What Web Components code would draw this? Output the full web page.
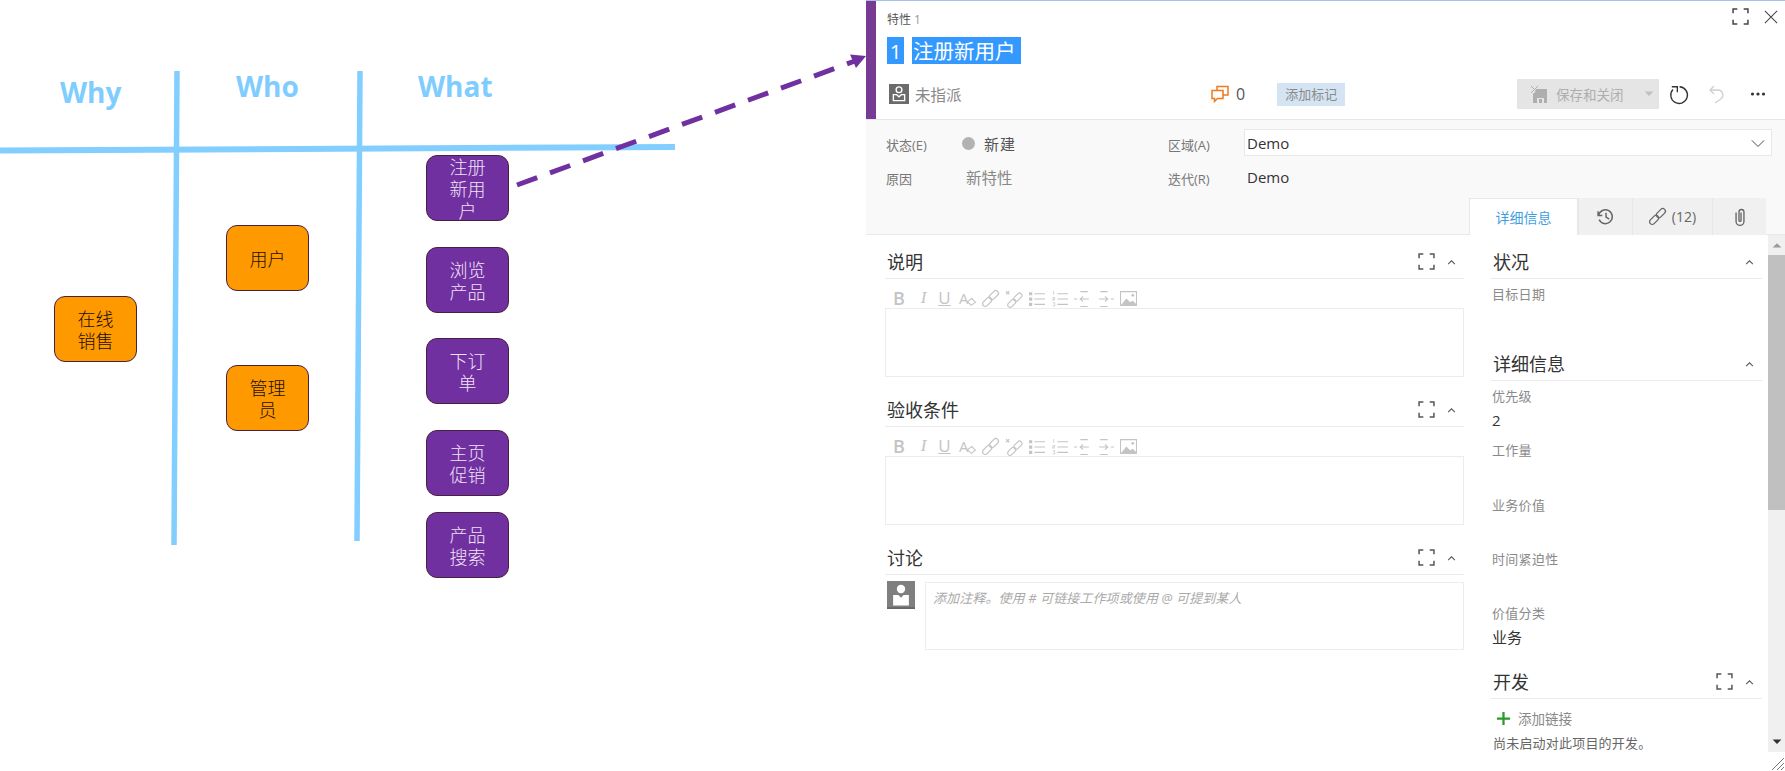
<!doctype html>
<html lang="zh">
<head>
<meta charset="utf-8">
<title>特性 1</title>
<style>
  html, body { margin: 0; height: 100%; overflow: hidden; background: #fff; }
  body { display: flex; font-family: "Open Sans", "Noto Sans CJK SC", sans-serif; color: #333; }
</style>
</head>
<body>
<story-canvas>
  <story-node x="426" y="155" h="66" kind="what">注册新用户</story-node>
  <story-node x="426" y="247" h="66" kind="what">浏览产品</story-node>
  <story-node x="426" y="338" h="66" kind="what">下订单</story-node>
  <story-node x="426" y="430" h="66" kind="what">主页促销</story-node>
  <story-node x="426" y="512" h="66" kind="what">产品搜索</story-node>
  <story-node x="226" y="225" h="66" kind="who">用户</story-node>
  <story-node x="226" y="365" h="66" kind="who">管理员</story-node>
  <story-node x="54" y="296" h="66" kind="who">在线销售</story-node>
</story-canvas>
<work-item></work-item>

<script>
const icons = {
  expand: '<path d="M1 5V1h4M11 1h4v4M15 11v4h-4M5 15H1v-4" fill="none" stroke="currentColor" stroke-width="1.4"/>',
  close: '<path d="M1 1l14 14M15 1L1 15" fill="none" stroke="currentColor" stroke-width="1.2"/>',
  up: '<path d="M2 11l6-6 6 6" fill="none" stroke="currentColor" stroke-width="1.8"/>',
  down: '<path d="M1 5l7 7 7-7" fill="none" stroke="currentColor" stroke-width="1.1"/>',
  person: '<rect width="16" height="16" fill="#6b6b6b"/><circle cx="8" cy="4.6" r="2.3" fill="none" stroke="#fff" stroke-width="1.1"/><path d="M3.5 8.5h2.6l1.9 1.7 1.9-1.7h2.6v4.8h-9z" fill="none" stroke="#fff" stroke-width="1.1"/>',
  avatar: '<rect width="16" height="16" fill="#7f7f7f"/><rect y="15" width="16" height="1" fill="#666"/><circle cx="8" cy="4.6" r="2.4" fill="#fff"/><path d="M3.5 8h3l1.5 1.6L9.500 8h3v6h-9z" fill="#fff"/>',
  comments: '<path d="M6 5V1.500h11v8.500h-5M1 5.500h11v8H6.500L3.500 16.500v-3H1z" fill="none" stroke="currentColor" stroke-width="1.5"/>',
  save: '<path d="M6 4h11v14h-3v-5H7v5H3V9l3-3z" fill="currentColor"/><rect x="9" y="14" width="3" height="4" fill="currentColor"/><path d="M1 1l7 7M8 1L1 8" fill="none" stroke="currentColor" stroke-width="1"/>',
  refresh: '<path d="M2.500 2.500h5v5M9.500 2.500A7.500 7.500 0 1 1 3.500 5" fill="none" stroke="currentColor" stroke-width="1.2"/>',
  undo: '<path d="M6 1L2 5l4 4M2 5h8a5 5 0 0 1 2 9.500L7 18" fill="none" stroke="currentColor" stroke-width="1.3"/>',
  dots: '<circle cx="2.500" cy="8" r="1.600" fill="currentColor"/><circle cx="8" cy="8" r="1.600" fill="currentColor"/><circle cx="13.500" cy="8" r="1.600" fill="currentColor"/>',
  caret: '<path d="M1 4h14l-7 7z" fill="currentColor"/>',
  history: '<path d="M1 3v4h4M1.500 7A6.500 6.500 0 1 1 2 11M8.500 4.500V8.500l3 2" fill="none" stroke="currentColor" stroke-width="1.4"/>',
  link: '<g transform="rotate(-45 8 8)" fill="none" stroke="currentColor" stroke-width="1.2"><rect x="-1.500" y="5.500" width="10" height="5" rx="2.500"/><rect x="7.500" y="5.500" width="10" height="5" rx="2.500"/></g>',
  clip: '<path d="M4.500 4v8a3.500 3.500 0 0 0 7 0V3.500a2.200 2.200 0 0 0-4.400 0V11a.9.9 0 0 0 1.800 0V4" fill="none" stroke="currentColor" stroke-width="1.2"/>',
  plus: '<path d="M8 1v14M1 8h14" fill="none" stroke="currentColor" stroke-width="2.400"/>',
  eraser: '<text x="0" y="13" font-size="14" font-family="Open Sans" fill="currentColor">A</text><path d="M8 11l4-3 3.500 3.500-4 3z" fill="none" stroke="currentColor" stroke-width="1"/>',
  unlink: '<path d="M1 1l3 3M4 1L1 4" fill="none" stroke="currentColor" stroke-width="1"/><g transform="rotate(-45 10 10) translate(2.500 2) scale(.9)" fill="none" stroke="currentColor" stroke-width="1.200"><rect x="-1.500" y="5.500" width="10" height="5" rx="2.500"/><rect x="7.500" y="5.500" width="10" height="5" rx="2.500"/></g>',
  ul: '<path d="M1 2h3v3H1zM1 7h3v3H1zM1 12h3v3H1z" fill="currentColor"/><path d="M6 3.500h10M6 8.500h10M6 13.500h10" stroke="currentColor" stroke-width="1"/>',
  ol: '<path d="M2.500 1v3.500M1.500 7h2v1.500h-2v1h2M1.500 12h2v3h-2" fill="none" stroke="currentColor" stroke-width=".7"/><path d="M6 3.500h10M6 8.500h10M6 13.500h10" stroke="currentColor" stroke-width="1"/>',
  outdent: '<path d="M6 1.500h7M0 8.500h3M6 15.500h7M14 8.500H6l2.500-2.500M6 8.500L8.500 11" fill="none" stroke="currentColor" stroke-width="1"/>',
  indent: '<path d="M3 1.500h7M13 8.500h3M3 15.500h7M2 8.500h8L7.500 6M10 8.500L7.500 11" fill="none" stroke="currentColor" stroke-width="1"/>',
  image: '<path d="M.5 1.500h15v13H.5z" fill="none" stroke="currentColor"/><path d="M1 14l5-6 3.500 3.500L12 10l3 3v1.500H1z" fill="currentColor"/><circle cx="12" cy="5" r="1.300" fill="currentColor"/>',
  grip: '<path d="M15 3L3 15M15 8l-7 7M15 12l-3 3" stroke="#777" stroke-width="1" fill="none"/>'
}

customElements.define('sk-icon', class extends HTMLElement {
  connectedCallback () {
    if (this.shadowRoot) return
    const size = this.getAttribute('size') || 16
    const box = this.getAttribute('box') || 16
    this.attachShadow({ mode: 'open' }).innerHTML = `
      <style>
        :host { display: inline-flex; flex: none; line-height: 0; }
        svg { display: block; overflow: visible; }
      </style>
      <svg width="${size}" height="${size}" viewBox="0 0 ${box} ${box}">${icons[this.getAttribute('name')]}</svg>`
  }
})

customElements.define('story-canvas', class extends HTMLElement {
  constructor () {
    super()
    this.attachShadow({ mode: 'open' }).innerHTML = `
      <style>
        :host { display: block; position: relative; flex: none; width: 866px; height: 771px; }
        svg { position: absolute; left: 0; top: 0; z-index: 2; overflow: visible; pointer-events: none; }
        .axes { z-index: 0; }
        span {
          position: absolute; color: #7fcdff; font: 700 28px/40px "Open Sans", sans-serif;
        }
      </style>
      <svg class="axes" width="866" height="771">
        <g stroke="#82ceff" fill="none">
          <path d="M0 150.500L675 147" stroke-width="6"/>
          <path d="M177 71L174 545M360 71L357 541" stroke-width="5.500"/>
        </g>
      </svg>
      <span style="left:60px;top:72px">Why</span>
      <span style="left:236px;top:66px">Who</span>
      <span style="left:418px;top:66px">What</span>
      <slot></slot>
      <svg width="866" height="771">
        <path d="M517 185L855 61" stroke="#7030a0" stroke-width="5" stroke-dasharray="21.500 13.650" fill="none"/>
        <path d="M866 56L850 54.500L856 68z" fill="#7030a0"/>
      </svg>`
  }
})

customElements.define('story-node', class extends HTMLElement {
  connectedCallback () {
    if (this.shadowRoot) return
    const who = this.getAttribute('kind') === 'who'
    this.attachShadow({ mode: 'open' }).innerHTML = `
      <style>
        :host {
          position: absolute; z-index: 1; box-sizing: border-box; display: flex; align-items: center; justify-content: center;
          left: ${this.getAttribute('x')}px; top: ${this.getAttribute('y')}px; width: 83px; height: ${this.getAttribute('h')}px;
          padding: 0 21px; text-align: center; font-size: 18px; line-height: 22px; border-radius: 11px; font-weight: 300;
          border: 1px solid #4a2040; font-family: "Noto Sans CJK SC", sans-serif;
          background: ${who ? '#ff9900' : '#7030a0'}; color: ${who ? '#1a1000' : '#f1e2f7'};
        }
      </style>
      <slot></slot>`
  }
})

customElements.define('form-section', class extends HTMLElement {
  connectedCallback () {
    if (this.shadowRoot) return
    const expand = this.hasAttribute('expand') ? '<sk-icon name="expand" size="17"></sk-icon>' : ''
    this.attachShadow({ mode: 'open' }).innerHTML = `
      <style>
        :host { display: block; }
        header {
          display: flex; align-items: center; height: 34px; border-bottom: 1px solid #ebebeb; color: #555;
          padding-left: 2px;
        }
        h2 { margin: 0 auto 0 0; font: 400 18px/1 "Noto Sans CJK SC", sans-serif; color: #333; }
        .chev { margin: 3px 8px 0 12px; }
      </style>
      <header>
        <h2>${this.getAttribute('heading')}</h2>
        ${expand}
        <sk-icon class="chev" name="up" size="9"></sk-icon>
      </header>
      <slot></slot>`
  }
})

customElements.define('rich-editor', class extends HTMLElement {
  constructor () {
    super()
    const cell = n => `<sk-icon name="${n}" size="17"></sk-icon>`
    this.attachShadow({ mode: 'open' }).innerHTML = `
      <style>
        :host { display: block; }
        .tools {
          display: flex; align-items: center; gap: 6px; height: 18px; padding: 10px 0 1px 8px; color: #c4c4c4;
        }
        b, i, u { width: 17px; text-align: center; font: 400 17px/18px "Open Sans", sans-serif; }
        b { font-weight: 600; width: 11px; font-size: 18px; }
        i { font-family: "Liberation Serif", serif; font-style: italic; margin-left: 5px; width: 17px; }
        u { margin-left: -2px; }
        .box { height: 67px; border: 1px solid #ececec; }
      </style>
      <div class="tools">
        <b>B</b><i>I</i><u>U</u>
        ${['eraser', 'link', 'unlink', 'ul', 'ol', 'outdent', 'indent', 'image'].map(cell).join('')}
      </div>
      <div class="box"></div>`
  }
})

customElements.define('side-field', class extends HTMLElement {
  connectedCallback () {
    if (this.shadowRoot) return
    this.attachShadow({ mode: 'open' }).innerHTML = `
      <style>
        :host { display: block; height: 54.200px; padding-left: 1px; }
        div { font-size: 13px; line-height: 18px; color: #8a8a8a; letter-spacing: .3px; }
        p { margin: 3px 0 0; font-size: 15px; line-height: 24px; color: #333; }
      </style>
      <div>${this.getAttribute('label')}</div>
      <p>${this.getAttribute('value') || ''}</p>`
  }
})

customElements.define('wi-header', class extends HTMLElement {
  constructor () {
    super()
    this.attachShadow({ mode: 'open' }).innerHTML = `
      <style>
        :host {
          display: flex; flex: none; height: 120px; box-sizing: border-box; background: #fff;
          border-top: 1px solid #a6c0e6; border-bottom: 1px solid #e6e6e6;
        }
        .bar { width: 10px; background: #773b93; }
        .main { flex: 1; padding-left: 11px; display: flex; flex-direction: column; }
        .top { display: flex; height: 36px; align-items: center; font-size: 12px; color: #555; }
        .top em { font-style: normal; color: #999; margin-left: 3px; }
        .win { margin-left: auto; align-self: flex-start; margin-top: 7px; display: flex; align-items: center; color: #444; padding-right: 7px; gap: 15px; }
        .title { display: flex; gap: 8px; height: 27px; font-size: 20.500px; line-height: 28px; color: #fff; }
        .title span { background: #3399ff; }
        .title .id { width: 17px; text-align: center; }
        .title .name { padding: 0 5px 0 1px; }
        .row { display: flex; align-items: center; height: 30px; margin-top: 15px; padding-right: 16px; }
        .owner { display: flex; align-items: center; gap: 6px; width: 322px; padding-left: 2px; font-size: 15.500px; color: #888; }
        .count { display: flex; align-items: center; gap: 7px; font-size: 16px; color: #555; }
        .count sk-icon { color: #f07a1c; }
        .tag { margin-left: 32px; background: #d4e4f2; color: #8a8a8a; font-size: 13px; line-height: 23px; width: 68px; text-align: center; }
        .save {
          margin-left: auto; width: 142px; height: 30px; box-sizing: border-box; display: flex; align-items: center;
          padding-left: 13px; background: #e5e5e5; color: #aeaeae; font-size: 13.500px;
        }
        .save span { margin-left: 8px; }
        .save .car { margin-left: 20px; color: #c0c0c0; }
        .act { width: 22px; display: flex; justify-content: center; color: #333; }
        .act.off { color: #d0d0d0; }
      </style>
      <div class="bar"></div>
      <div class="main">
        <div class="top">
          <span>特性<em>1</em></span>
          <div class="win">
            <sk-icon name="expand" size="17"></sk-icon>
            <sk-icon name="close" size="14"></sk-icon>
          </div>
        </div>
        <div class="title"><span class="id">1</span><span class="name">注册新用户</span></div>
        <div class="row">
          <div class="owner"><sk-icon name="person" size="20"></sk-icon>未指派</div>
          <div class="count"><sk-icon name="comments" size="18" box="18"></sk-icon>0</div>
          <div class="tag">添加标记</div>
          <div class="save">
            <sk-icon name="save" size="18" box="18"></sk-icon>
            <span>保存和关闭</span>
            <sk-icon class="car" name="caret" size="10"></sk-icon>
          </div>
          <div class="act" style="margin-left:9px"><sk-icon name="refresh" size="20" box="18"></sk-icon></div>
          <div class="act off" style="margin-left:16px"><sk-icon name="undo" size="18" box="18"></sk-icon></div>
          <div class="act" style="margin-left:19px"><sk-icon name="dots" size="16"></sk-icon></div>
        </div>
      </div>`
  }
})

customElements.define('wi-fields', class extends HTMLElement {
  constructor () {
    super()
    this.attachShadow({ mode: 'open' }).innerHTML = `
      <style>
        :host {
          display: flex; flex-direction: column; flex: none; height: 115px; box-sizing: border-box; background: #f9f9f9;
          border-bottom: 1px solid #e8e8e8; padding: 9px 19px 0 20px; position: relative;
        }
        .grid { display: grid; grid-template-columns: 80px 202px 76px 528px; grid-auto-rows: 27px; row-gap: 7px; align-items: center; font-size: 15px; }
        label { font-size: 13px; color: #777; padding-top: 3px; }
        .state { display: flex; align-items: center; gap: 9px; color: #555; letter-spacing: 1px; margin-top: 2px; }
        .state i { width: 13px; height: 13px; border-radius: 50%; background: #b2b2b2; margin-left: -4px; }
        .reason { color: #888; font-size: 15.500px; margin-top: 1px; }
        .area { height: 27px; box-sizing: border-box; border: 1px solid #e8e8e8; background: #fff; display: flex; align-items: center; padding: 0 6px 0 2px; justify-content: space-between; color: #333; }
        .demo { padding-left: 3px; color: #333; margin-top: 1px; }
        .tabs { display: flex; margin-left: auto; margin-top: auto; height: 37px; margin-bottom: -1px; font-size: 14px; }
        .tabs div { display: flex; align-items: center; justify-content: center; gap: 6px; background: #f0f0f0; border-left: 1px solid #e8e8e8; color: #666; box-sizing: border-box; }
        .tabs .on { width: 109px; background: #fff; color: #3f9fe0; border: 1px solid #e8e8e8; border-bottom: 0; }
      </style>
      <div class="grid">
        <label>状态(E)</label><div class="state"><i></i>新建</div>
        <label>区域(A)</label><div class="area">Demo<sk-icon name="down" size="14" style="color:#444"></sk-icon></div>
        <label>原因</label><div class="reason">新特性</div>
        <label>迭代(R)</label><div class="demo">Demo</div>
      </div>
      <div class="tabs">
        <div class="on">详细信息</div>
        <div style="width:54px"><sk-icon name="history" size="17"></sk-icon></div>
        <div style="width:80px"><sk-icon name="link" size="17"></sk-icon>(12)</div>
        <div style="width:54px"><sk-icon name="clip" size="18"></sk-icon></div>
      </div>`
  }
})

customElements.define('scroll-rail', class extends HTMLElement {
  constructor () {
    super()
    this.attachShadow({ mode: 'open' }).innerHTML = `
      <style>
        :host { display: flex; flex-direction: column; flex: none; width: 17px; }
        .btn { height: 20px; background: #f0f0f0; display: flex; align-items: center; justify-content: center; color: #9a9a9a; }
        .btn.end { color: #333; height: 20px; }
        .thumb { height: 255px; background: #c0c0c0; }
        .track { flex: 1; background: #f0f0f0; }
        .corner { height: 19px; display: flex; align-items: flex-end; justify-content: flex-end; }
      </style>
      <div class="btn"><sk-icon name="caret" size="10" style="transform:scaleY(-1)"></sk-icon></div>
      <div class="thumb"></div>
      <div class="track"></div>
      <div class="btn end"><sk-icon name="caret" size="10"></sk-icon></div>
      <div class="corner"><sk-icon name="grip" size="16" box="16"></sk-icon></div>`
  }
})

customElements.define('work-item', class extends HTMLElement {
  constructor () {
    super()
    this.attachShadow({ mode: 'open' }).innerHTML = `
      <style>
        :host { display: flex; flex-direction: column; flex: 1; min-width: 0; height: 771px; overflow: hidden; }
        .body { flex: 1; min-height: 0; display: flex; overflow: hidden; }
        .left { width: 579px; margin-left: 19px; padding-top: 9px; flex: none; }
        .left form-section + form-section { margin-top: 15px; }
        .right { width: 271px; margin-left: 27px; padding-top: 9px; flex: none; }
        .right form-section + form-section { margin-top: 7px; }
        .right form-section:last-child { margin-top: 6px; }
        .pad { padding-top: 6px; }
        scroll-rail { margin-left: 6px; }
        .talk { display: flex; padding-top: 6px; }
        .talk sk-icon { margin-left: 2px; }
        .note {
          flex: 1; margin: 1px 0 0 10px; border: 1px solid #ececec; padding: 6px 7px; box-sizing: border-box; height: 68px;
          font-size: 13px; line-height: 18px; font-style: italic; color: #aaa; letter-spacing: .1px;
        }
        .add { display: flex; align-items: center; gap: 7px; height: 22px; margin: 8px 0 0 5px; font-size: 13.500px; color: #888; }
        .add sk-icon { color: #2b9a2b; }
        .none { margin: 5px 0 0 2px; font-size: 13px; line-height: 18px; color: #666; letter-spacing: .2px; }
      </style>
      <wi-header></wi-header>
      <wi-fields></wi-fields>
      <div class="body">
        <div class="left">
          <form-section heading="说明" expand><rich-editor></rich-editor></form-section>
          <form-section heading="验收条件" expand><rich-editor></rich-editor></form-section>
          <form-section heading="讨论" expand>
            <div class="talk">
              <sk-icon name="avatar" size="28"></sk-icon>
              <div class="note">添加注释。使用 # 可链接工作项或使用 @ 可提到某人</div>
            </div>
          </form-section>
        </div>
        <div class="right">
          <form-section heading="状况"><div class="pad"><side-field label="目标日期"></side-field></div></form-section>
          <form-section heading="详细信息">
            <div class="pad">
              <side-field label="优先级" value="2"></side-field>
              <side-field label="工作量"></side-field>
              <side-field label="业务价值"></side-field>
              <side-field label="时间紧迫性"></side-field>
              <side-field label="价值分类" value="业务"></side-field>
            </div>
          </form-section>
          <form-section heading="开发" expand>
            <div class="add"><sk-icon name="plus" size="15"></sk-icon>添加链接</div>
            <div class="none">尚未启动对此项目的开发。</div>
          </form-section>
        </div>
        <scroll-rail></scroll-rail>
      </div>`
  }
})
</script>
</body>
</html>
